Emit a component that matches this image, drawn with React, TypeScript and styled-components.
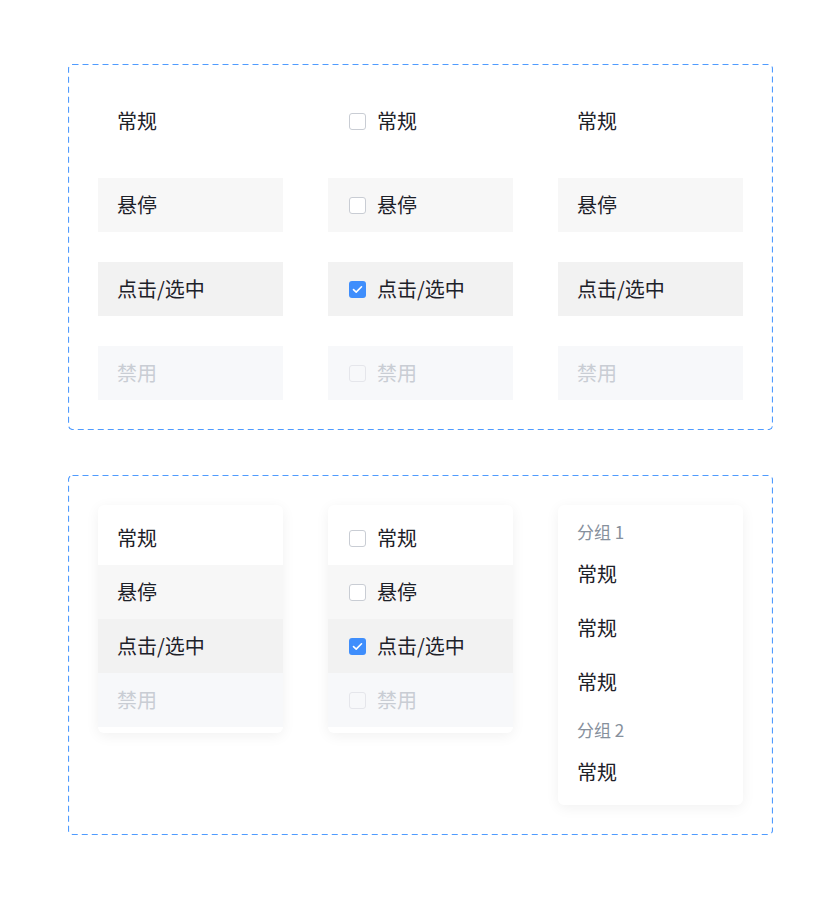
import styled, { createGlobalStyle, css } from "styled-components";

type State = "normal" | "hover" | "active" | "disabled";

const GlobalStyle = createGlobalStyle`
  body {
    margin: 0;
    background: #fff;
    font-family: "Noto Sans CJK SC", "Noto Sans", sans-serif;
    color: #1d2129;
  }
`;

const Page = styled.div`
  display: flex;
  flex-direction: column;
  gap: 45px;
  padding: 64px 0 64px 68px;
`;

const Frame = styled.div`
  box-sizing: border-box;
  width: 705px;
  padding: 30px;
  display: grid;
  grid-template-columns: repeat(3, 1fr);
  column-gap: 45px;
  align-items: start;
  border-radius: 4px;
  background-image: url("data:image/svg+xml,%3csvg width='100%25' height='100%25' xmlns='http://www.w3.org/2000/svg'%3e%3crect x='0.5' y='0.5' width='calc(100%25 - 1px)' height='calc(100%25 - 1px)' fill='none' rx='4' ry='4' stroke='%234F9BFF' stroke-width='1.2' stroke-dasharray='6%2c 4'/%3e%3c/svg%3e");
`;

const Column = styled.div`
  display: flex;
  flex-direction: column;
  gap: 30px;
`;

const Card = styled.div`
  display: flex;
  flex-direction: column;
  padding: 6px 0;
  background: #fff;
  border-radius: 6px;
  box-shadow: 0 3px 14px rgba(0, 0, 0, 0.06);
  overflow: hidden;
`;

const rowBg: Record<State, string> = {
  normal: "transparent",
  hover: "#f7f7f7",
  active: "#f2f2f2",
  disabled: "#f7f8fa",
};

const Row = styled.div<{ $state: State }>`
  box-sizing: border-box;
  height: 54px;
  padding: 0 19px 2px;
  display: flex;
  align-items: center;
  gap: 11px;
  font-size: 20px;
  background: ${(p) => rowBg[p.$state]};
  color: ${(p) => (p.$state === "disabled" ? "#c9cdd4" : "#1d2129")};
`;

const GroupTitle = styled.div`
  height: 36px;
  padding: 4px 19px 0;
  box-sizing: border-box;
  display: flex;
  align-items: center;
  font-size: 17px;
  color: #86909c;
`;

const Box = styled.span<{ $checked?: boolean; $disabled?: boolean }>`
  box-sizing: border-box;
  width: 17px;
  height: 17px;
  margin: 2px 0 0 2px;
  border-radius: 3px;
  display: flex;
  align-items: center;
  justify-content: center;
  flex-shrink: 0;
  ${(p) =>
    p.$checked
      ? css`
          background: #3f8efc;
          border: none;
        `
      : p.$disabled
      ? css`
          background: #f7f8fa;
          border: 1px solid #e5e6eb;
        `
      : css`
          background: #fff;
          border: 1px solid #c9cdd4;
        `}
`;

const Checkbox = ({ state }: { state: State }) => (
  <Box $checked={state === "active"} $disabled={state === "disabled"}>
    {state === "active" && (
      <svg width="11" height="9" viewBox="0 0 11 9" fill="none">
        <path
          d="M1.5 4.6 4.2 7.1 9.5 1.8"
          stroke="#fff"
          strokeWidth="1.6"
          strokeLinecap="round"
          strokeLinejoin="round"
        />
      </svg>
    )}
  </Box>
);

const items: { state: State; label: string }[] = [
  { state: "normal", label: "常规" },
  { state: "hover", label: "悬停" },
  { state: "active", label: "点击/选中" },
  { state: "disabled", label: "禁用" },
];

const Rows = ({ check }: { check?: boolean }) => (
  <>
    {items.map((it) => (
      <Row key={it.state} $state={it.state}>
        {check && <Checkbox state={it.state} />}
        {it.label}
      </Row>
    ))}
  </>
);

const App = () => (
  <>
    <GlobalStyle />
    <Page>
      <Frame>
        <Column>
          <Rows />
        </Column>
        <Column>
          <Rows check />
        </Column>
        <Column>
          <Rows />
        </Column>
      </Frame>
      <Frame>
        <Card>
          <Rows />
        </Card>
        <Card>
          <Rows check />
        </Card>
        <Card>
          <GroupTitle>分组 1</GroupTitle>
          <Row $state="normal">常规</Row>
          <Row $state="normal">常规</Row>
          <Row $state="normal">常规</Row>
          <GroupTitle>分组 2</GroupTitle>
          <Row $state="normal">常规</Row>
        </Card>
      </Frame>
    </Page>
  </>
);

export default App;
